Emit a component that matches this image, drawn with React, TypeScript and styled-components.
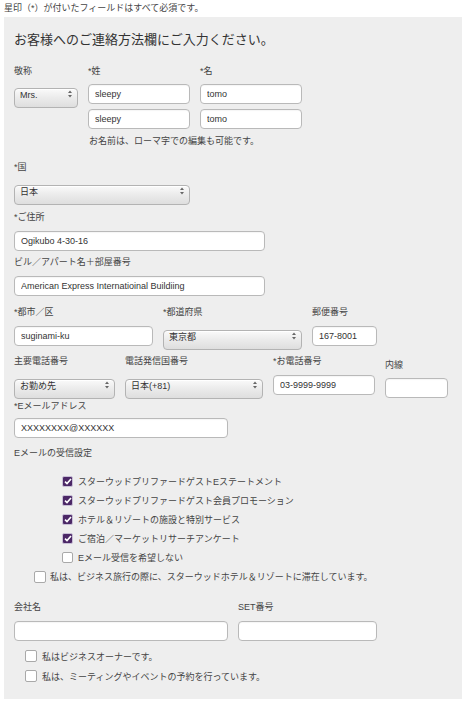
import React from "react";
import styled, { createGlobalStyle } from "styled-components";

const GlobalStyle = createGlobalStyle`
  html, body {
    margin: 0;
    padding: 0;
    background: #fff;
  }
  body {
    font-family: "Liberation Sans", "Noto Sans CJK JP", sans-serif;
    color: #444;
  }
`;

const Note = styled.div`
  padding: 2px 4px 0;
  font-size: 9px;
  line-height: 13px;
  color: #444;
`;

const Panel = styled.div`
  margin: 2px 6px 0 4px;
  padding: 15px 10px 13px;
  background: #eeeeee;
`;

const Heading = styled.h2`
  margin: 0;
  font-size: 13px;
  line-height: 16px;
  font-weight: normal;
  color: #333;
`;

const Row = styled.div<{ $mt: number; $gap?: number }>`
  display: flex;
  align-items: flex-start;
  gap: ${(p) => p.$gap ?? 10}px;
  margin-top: ${(p) => p.$mt}px;
`;

const Field = styled.div<{ $w: number; $gap?: number; $pt?: number }>`
  display: flex;
  flex-direction: column;
  width: ${(p) => p.$w}px;
  gap: ${(p) => p.$gap ?? 8}px;
  padding-top: ${(p) => p.$pt ?? 0}px;
`;

const Stack = styled.div`
  display: flex;
  flex-direction: column;
  gap: 5px;
`;

const Label = styled.div<{ $mt?: number }>`
  font-size: 9px;
  line-height: 12px;
  color: #444;
  white-space: nowrap;
  margin-top: ${(p) => p.$mt ?? 0}px;
`;

const Hint = styled(Label)`
  padding-left: 75px;
`;

const Input = styled.input<{ $w?: number }>`
  box-sizing: border-box;
  width: ${(p) => (p.$w ? `${p.$w}px` : "100%")};
  height: 20px;
  margin: 0;
  padding: 0 6px;
  border: 1px solid #b9b9b9;
  border-radius: 4px;
  background: #fff;
  font-family: "Liberation Sans", "Noto Sans CJK JP", sans-serif;
  font-size: 9px;
  color: #333;
  outline: none;
  box-shadow: inset 0 1px 1px rgba(0, 0, 0, 0.04);
`;

const SelectWrap = styled.div<{ $w?: number }>`
  position: relative;
  width: ${(p) => (p.$w ? `${p.$w}px` : "100%")};
  height: 20px;
`;

const SelectBox = styled.select`
  box-sizing: border-box;
  width: 100%;
  height: 100%;
  margin: 0;
  padding: 0 14px 5px 5px;
  appearance: none;
  -webkit-appearance: none;
  border: 1px solid #b3b3b3;
  border-radius: 4px;
  background: linear-gradient(#fafafa 0%, #ececec 45%, #dedede 100%);
  box-shadow: inset 0 1px 0 #fff;
  font-family: "Liberation Sans", "Noto Sans CJK JP", sans-serif;
  font-size: 9px;
  color: #333;
  outline: none;
`;

const Arrows = styled.svg`
  position: absolute;
  right: 6px;
  top: 6px;
  pointer-events: none;
`;

const Select = ({ value, w }: { value: string; w?: number }) => (
  <SelectWrap $w={w}>
    <SelectBox defaultValue={value}>
      <option>{value}</option>
    </SelectBox>
    <Arrows width="4" height="8" viewBox="0 0 4 8">
      <path d="M0 3 L2 0.5 L4 3 Z M0 5 L2 7.5 L4 5 Z" fill="#666" />
    </Arrows>
  </SelectWrap>
);

const CheckList = styled.div<{ $mt: number }>`
  display: flex;
  flex-direction: column;
  margin-top: ${(p) => p.$mt}px;
`;

const CheckRow = styled.label<{ $indent: number; $h?: number; $gap?: number }>`
  display: flex;
  align-items: center;
  gap: ${(p) => p.$gap ?? 5}px;
  height: ${(p) => p.$h ?? 19}px;
  padding-left: ${(p) => p.$indent}px;
  font-size: 9px;
  color: #444;
  white-space: nowrap;
`;

const Box = styled.span<{ $on?: boolean; $size?: number }>`
  box-sizing: border-box;
  display: inline-flex;
  align-items: center;
  justify-content: center;
  flex: none;
  width: ${(p) => p.$size ?? 11}px;
  height: ${(p) => p.$size ?? 11}px;
  border: 1px solid ${(p) => (p.$on ? "#c8bfd6" : "#a9a9a9")};
  border-radius: 2px;
  background: ${(p) => (p.$on ? "#4b2766" : "#fff")};
`;

const Check = ({
  label,
  on,
  indent,
  size,
  h,
  gap,
}: {
  label: string;
  on?: boolean;
  indent: number;
  size?: number;
  h?: number;
  gap?: number;
}) => (
  <CheckRow $indent={indent} $h={h} $gap={gap}>
    <Box $on={on} $size={size}>
      {on && (
        <svg width="8" height="7" viewBox="0 0 8 7">
          <path
            d="M1 3.6 L3 5.6 L7 1"
            fill="none"
            stroke="#fff"
            strokeWidth="1.6"
          />
        </svg>
      )}
    </Box>
    {label}
  </CheckRow>
);

const emailPrefs = [
  { label: "スターウッドプリファードゲストEステートメント", on: true },
  { label: "スターウッドプリファードゲスト会員プロモーション", on: true },
  { label: "ホテル＆リゾートの施設と特別サービス", on: true },
  { label: "ご宿泊／マーケットリサーチアンケート", on: true },
  { label: "Eメール受信を希望しない", on: false },
];

export default function App() {
  return (
    <>
      <GlobalStyle />
      <Note>星印（*）が付いたフィールドはすべて必須です。</Note>
      <Panel>
        <Heading>お客様へのご連絡方法欄にご入力ください。</Heading>

        <Row $mt={17}>
          <Field $w={64} $gap={7}>
            <Label>敬称</Label>
            <Select value="Mrs." />
          </Field>
          <Field $w={102} $gap={7}>
            <Label>*姓</Label>
            <Stack>
              <Input defaultValue="sleepy" />
              <Input defaultValue="sleepy" />
            </Stack>
          </Field>
          <Field $w={102} $gap={7}>
            <Label>*名</Label>
            <Stack>
              <Input defaultValue="tomo" />
              <Input defaultValue="tomo" />
            </Stack>
          </Field>
        </Row>
        <Hint $mt={6}>お名前は、ローマ字での編集も可能です。</Hint>

        <Row $mt={14}>
          <Field $w={176}>
            <Label>*国</Label>
            <Select value="日本" />
          </Field>
        </Row>

        <Row $mt={10}>
          <Field $w={251}>
            <Label>*ご住所</Label>
            <Input defaultValue="Ogikubo 4-30-16" />
            <Label $mt={-3}>ビル／アパート名＋部屋番号</Label>
            <Input defaultValue="American Express Internatioinal Buildiing" />
          </Field>
        </Row>

        <Row $mt={10} $gap={10}>
          <Field $w={139}>
            <Label>*都市／区</Label>
            <Input defaultValue="suginami-ku" />
          </Field>
          <Field $w={139}>
            <Label>*都道府県</Label>
            <Select value="東京都" />
          </Field>
          <Field $w={65}>
            <Label>郵便番号</Label>
            <Input defaultValue="167-8001" />
          </Field>
        </Row>

        <Row $mt={9} $gap={10}>
          <Field $w={101} $gap={8}>
            <Label>主要電話番号</Label>
            <Select value="お勤め先" />
          </Field>
          <Field $w={138} $gap={8}>
            <Label>電話発信国番号</Label>
            <Select value="日本(+81)" />
          </Field>
          <Field $w={102} $gap={8}>
            <Label>*お電話番号</Label>
            <Input defaultValue="03-9999-9999" />
          </Field>
          <Field $w={63} $gap={7} $pt={4}>
            <Label>内線</Label>
            <Input />
          </Field>
        </Row>

        <Row $mt={2}>
          <Field $w={214} $gap={6}>
            <Label>*Eメールアドレス</Label>
            <Input defaultValue="XXXXXXXX@XXXXXX" />
          </Field>
        </Row>

        <Label $mt={9}>Eメールの受信設定</Label>
        <CheckList $mt={13}>
          {emailPrefs.map((item) => (
            <Check key={item.label} label={item.label} on={item.on} indent={48} />
          ))}
          <Check
            label="私は、ビジネス旅行の際に、スターウッドホテル＆リゾートに滞在しています。"
            indent={20}
            size={12}
            gap={4}
          />
        </CheckList>

        <Row $mt={15}>
          <Field $w={214}>
            <Label>会社名</Label>
            <Input />
          </Field>
          <Field $w={139}>
            <Label>SET番号</Label>
            <Input />
          </Field>
        </Row>

        <CheckList $mt={5}>
          <Check label="私はビジネスオーナーです。" indent={11} size={12} h={20} />
          <Check
            label="私は、ミーティングやイベントの予約を行っています。"
            indent={11}
            size={12}
            h={20}
          />
        </CheckList>
      </Panel>
    </>
  );
}
